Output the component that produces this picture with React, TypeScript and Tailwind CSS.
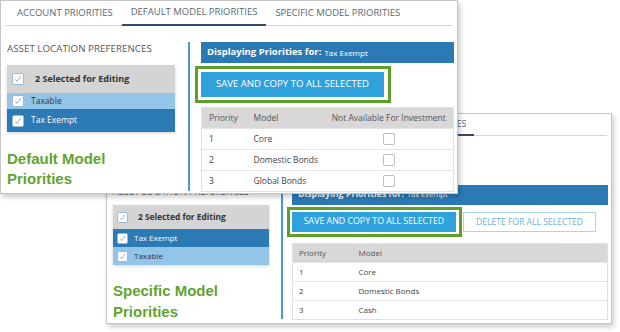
import React from 'react';

const green = 'border-[#5e9f2c]';

function Tick({ size, border = 'border-[#9fb9d0]' }: { size: number; border?: string }) {
  return (
    <span
      className={`flex shrink-0 items-center justify-center rounded-[2px] border bg-white ${border}`}
      style={{ width: size, height: size }}
    >
      <svg viewBox="0 0 10 10" width={size - 4} height={size - 4}>
        <polyline points="1.6,5.4 3.8,8 8.4,1.4" fill="none" stroke="#7b98b4" strokeWidth="1" />
      </svg>
    </span>
  );
}

function EmptyBox() {
  return <span className="mx-auto block h-[12px] w-[12px] rounded-[2px] border border-[#bdbdbd] bg-white" />;
}

function DefaultPanel() {
  const rows = ['Core', 'Domestic Bonds', 'Global Bonds'];
  return (
    <div className="absolute left-0 top-0 z-10 flex h-[194px] w-[458px] flex-col border border-[#c6c6c6] bg-white shadow-[2px_3px_5px_rgba(0,0,0,0.22)]">
      {/* tabs */}
      <div className="mx-[4px] flex h-[25px] border-b border-[#d6d6d6] text-[9.5px] text-[#5b6670]">
        <div className="flex items-center pl-[12px] pr-[9px]">ACCOUNT PRIORITIES</div>
        <div className="-mb-px flex items-center border-b-2 border-[#2d4e72] px-[9px]">DEFAULT MODEL PRIORITIES</div>
        <div className="flex items-center px-[9px]">SPECIFIC MODEL PRIORITIES</div>
      </div>

      <div className="flex flex-1 pt-[16px]">
        {/* left column */}
        <div className="flex w-[187px] flex-col pl-[6px]">
          <div className="h-[14px] text-[9.8px] leading-[14px] text-[#585858]">ASSET LOCATION PREFERENCES</div>
          <div className="mt-[9px] w-[168px] shadow-[0_1px_3px_rgba(0,0,0,0.18)]">
            <div className="flex h-[28px] items-center gap-[11px] bg-[#d4d4d4] pl-[5px]">
              <Tick size={12} />
              <span className="text-[9px] font-bold text-[#333]">2 Selected for Editing</span>
            </div>
            <div className="flex h-[16px] items-center gap-[7px] bg-[#93c5e8] pl-[5px] text-[8.5px] text-[#334]">
              <Tick size={12} />
              Taxable
            </div>
            <div className="flex h-[23px] items-center gap-[7px] bg-[#2b7ab6] pl-[5px] text-[8.5px] text-white">
              <Tick size={12} />
              Tax Exempt
            </div>
          </div>
          <div className="mt-[17px] font-['Liberation_Sans',Arial,sans-serif] text-[15px] font-bold leading-[20px] text-[#62a430]">
            Default Model
            <br />
            Priorities
          </div>
        </div>

        <div className="mb-[2px] w-[2px] bg-[#4b98d2]" />

        {/* right column */}
        <div className="ml-[11px] flex w-[253px] flex-col">
          <div className="flex h-[21px] items-center gap-[3px] bg-[#2b7ab6] pl-[6px] text-white">
            <span className="text-[9.5px] font-bold">Displaying Priorities for:</span>
            <span className="text-[8px]">Tax Exempt</span>
          </div>
          <div className="relative mt-[9px] w-[183px]">
            <div className="flex h-[25px] items-center justify-center bg-[#2fa2dc] text-[9.6px] text-white">
              SAVE AND COPY TO ALL SELECTED
            </div>
            <div className={`absolute -bottom-[6px] -left-[6px] -right-[7px] -top-[6px] border-[3.5px] ${green}`} />
          </div>
          <table className="mt-[10px] w-full border border-[#e0e0e0] text-[8.5px] text-[#444]">
            <thead>
              <tr className="h-[21px] bg-[#d8d8d8] text-[#555]">
                <th className="w-[45px] pl-[7px] text-left font-normal">Priority</th>
                <th className="w-[78px] pl-[7px] text-left font-normal">Model</th>
                <th className="text-center font-normal">Not Available For Investment</th>
              </tr>
            </thead>
            <tbody>
              {rows.map((r, i) => (
                <tr key={r} className="h-[21px] border-t border-[#e3e3e3]">
                  <td className="pl-[7px]">{i + 1}</td>
                  <td className="pl-[7px]">{r}</td>
                  <td>
                    <EmptyBox />
                  </td>
                </tr>
              ))}
            </tbody>
          </table>
        </div>
      </div>
    </div>
  );
}

function SpecificPanel() {
  const rows = ['Core', 'Domestic Bonds', 'Cash'];
  return (
    <div className="absolute left-[106px] top-[113px] flex h-[211px] w-[506px] flex-col border border-[#c6c6c6] bg-white shadow-[2px_3px_5px_rgba(0,0,0,0.2)]">
      <div className="mx-[4px] flex h-[22px] border-b border-[#d6d6d6] text-[8.6px] text-[#5b6670]">
        <div className="flex items-center pl-[10px] pr-[7px]">ACCOUNT PRIORITIES</div>
        <div className="flex items-center px-[8px]">DEFAULT MODEL PRIORITIES</div>
        <div className="-mb-px flex items-center border-b-2 border-[#2d4e72] px-[8px]">SPECIFIC MODEL PRIORITIES</div>
      </div>

      <div className="flex flex-1 pt-[49px]">
        <div className="flex w-[174px] flex-col pl-[6px]">
          <div className="h-[14px] text-[9.2px] leading-[14px] text-[#585858]">ASSET LOCATION PREFERENCES</div>
          <div className="mt-[6px] w-[156px] shadow-[0_1px_3px_rgba(0,0,0,0.18)]">
            <div className="flex h-[24px] items-center gap-[10px] bg-[#d4d4d4] pl-[4px]">
              <Tick size={11} />
              <span className="text-[8.4px] font-bold text-[#333]">2 Selected for Editing</span>
            </div>
            <div className="flex h-[18px] items-center gap-[6px] bg-[#2b7ab6] pl-[4px] text-[8px] text-white">
              <Tick size={11} />
              Tax Exempt
            </div>
            <div className="flex h-[18px] items-center gap-[6px] bg-[#93c5e8] pl-[4px] text-[8px] text-[#334]">
              <Tick size={11} />
              Taxable
            </div>
          </div>
          <div className="mt-[15px] font-['Liberation_Sans',Arial,sans-serif] text-[15px] font-bold leading-[21px] text-[#62a430]">
            Specific Model
            <br />
            Priorities
          </div>
        </div>

        <div className="mb-[4px] w-[2px] bg-[#4b98d2]" />

        <div className="ml-[9px] flex w-[316px] flex-col">
          <div className="flex h-[20px] items-center gap-[3px] bg-[#2b7ab6] pl-[6px] text-white">
            <span className="text-[8.8px] font-bold">Displaying Priorities for:</span>
            <span className="text-[7.5px]">Tax Exempt</span>
          </div>
          <div className="mt-[7px] flex items-center gap-[7px]">
            <div className="relative w-[164px]">
              <div className="flex h-[20px] items-center justify-center bg-[#2fa2dc] text-[8.8px] text-white">
                SAVE AND COPY TO ALL SELECTED
              </div>
              <div className={`absolute -bottom-[5px] -left-[5px] -right-[6px] -top-[5px] border-[3px] ${green}`} />
            </div>
            <div className="flex h-[20px] w-[133px] items-center justify-center border border-[#a9d4ee] bg-white text-[8.6px] text-[#6cb2dd]">
              DELETE FOR ALL SELECTED
            </div>
          </div>
          <table className="mt-[11px] w-full border border-[#e0e0e0] text-[8px] text-[#444]">
            <thead>
              <tr className="h-[19px] bg-[#d8d8d8] text-[#555]">
                <th className="w-[60px] pl-[6px] text-left font-normal">Priority</th>
                <th className="pl-[6px] text-left font-normal">Model</th>
              </tr>
            </thead>
            <tbody>
              {rows.map((r, i) => (
                <tr key={r} className="h-[19px] border-t border-[#e3e3e3]">
                  <td className="pl-[6px]">{i + 1}</td>
                  <td className="pl-[6px]">{r}</td>
                </tr>
              ))}
            </tbody>
          </table>
        </div>
      </div>
    </div>
  );
}

export default function App() {
  return (
    <div className="relative h-[332px] w-[620px] overflow-hidden bg-white font-['Open_Sans','Noto_Sans',sans-serif]">
      <SpecificPanel />
      <DefaultPanel />
    </div>
  );
}
